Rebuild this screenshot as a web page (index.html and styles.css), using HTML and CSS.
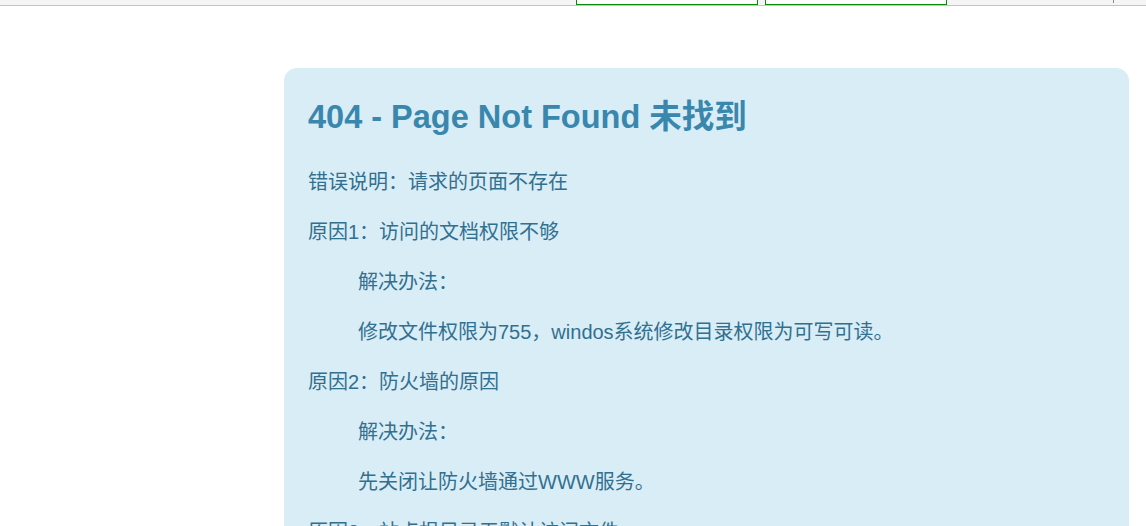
FILE: index.html
```html
<!DOCTYPE html>
<html lang="zh-CN">
<head>
<meta charset="utf-8">
<title>404 - Page Not Found 未找到</title>
<link rel="stylesheet" href="styles.css">
</head>
<body>
<div class="topbar">
  <div class="field"></div>
  <div class="field"></div>
  <div class="tick"></div>
</div>
<div class="card">
  <h1 class="title">404 - Page Not Found 未找到</h1>
  <p class="line">错误说明：请求的页面不存在</p>
  <p class="line">原因1：访问的文档权限不够</p>
  <p class="line indent">解决办法：</p>
  <p class="line indent">修改文件权限为755，windos系统修改目录权限为可写可读。</p>
  <p class="line">原因2：防火墙的原因</p>
  <p class="line indent">解决办法：</p>
  <p class="line indent">先关闭让防火墙通过WWW服务。</p>
  <p class="line">原因3：站点根目录无默认访问文件</p>
  <p class="line indent">解决办法：</p>
  <p class="line indent">在站点根目录下创建一个默认首页文件。</p>
</div>
</body>
</html>
```

FILE: styles.css
```css
html, body {
  margin: 0;
  padding: 0;
  background: #ffffff;
  font-family: "Liberation Sans", "Noto Sans CJK SC", sans-serif;
}

.topbar {
  display: flex;
  align-items: flex-start;
  height: 5px;
  background: #f5f5f5;
  border-bottom: 1px solid #c3c3c3;
  padding-left: 576px;
  gap: 7px;
}

.field {
  width: 180px;
  height: 4px;
  background: #ffffff;
  border: 1px solid #0a8a0a;
  border-top: none;
}

.tick {
  width: 1px;
  height: 3px;
  background: #8a8a8a;
  margin-left: 159px;
}

.card {
  margin: 62px 0 0 284px;
  width: 845px;
  box-sizing: border-box;
  background: #d9edf7;
  border-radius: 13px 13px 0 0;
  padding: 31px 24px 20px 24px;
  min-height: 480px;
}

.title {
  margin: 0 0 32px 0;
  font-size: 32.5px;
  line-height: 36px;
  font-weight: bold;
  color: #3a87ad;
}

.line {
  margin: 0 0 20px 0;
  font-size: 20px;
  line-height: 30px;
  color: #31708f;
}

.indent {
  padding-left: 50px;
}
```
